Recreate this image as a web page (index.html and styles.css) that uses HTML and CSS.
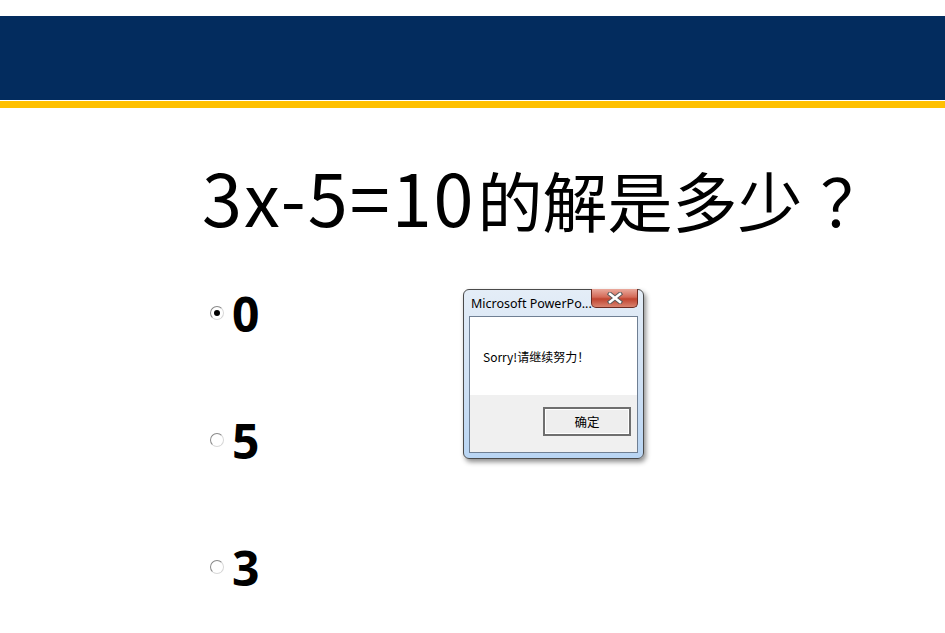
FILE: index.html
```html
<!DOCTYPE html>
<html lang="zh-CN">
<head>
  <meta charset="UTF-8" />
  <meta name="viewport" content="width=device-width, initial-scale=1.0" />
  <title>3x-5=10的解是多少？</title>
  <link rel="stylesheet" href="styles.css">
</head>
<body>

<header class="banner"></header>
<div class="stripe"></div>

<main class="slide">
  <h1 class="question"><span class="formula">3x-5=10</span>的解是多少<span class="qmark">？</span></h1>

  <div class="options">
    <label class="option">
      <span class="radio checked"></span>
      <span class="option-text">0</span>
    </label>
    <label class="option">
      <span class="radio"></span>
      <span class="option-text">5</span>
    </label>
    <label class="option">
      <span class="radio"></span>
      <span class="option-text">3</span>
    </label>
  </div>

  <div class="dialog">
    <div class="dialog-titlebar">
      <span class="dialog-title">Microsoft PowerPo...</span>
      <button class="close-btn" type="button">
        <svg width="16" height="12" viewBox="0 0 16 12">
          <path d="M3 2 L13 10 M13 2 L3 10" stroke="#5a5a5a" stroke-width="4.5" stroke-linecap="square"/>
          <path d="M3 2 L13 10 M13 2 L3 10" stroke="#fff" stroke-width="2.5" stroke-linecap="square"/>
        </svg>
      </button>
    </div>
    <div class="dialog-body">
      <div class="dialog-message">Sorry!请继续努力！</div>
      <div class="dialog-footer">
        <button class="ok-btn" type="button">确定</button>
      </div>
    </div>
  </div>
</main>

</body>
</html>
```

FILE: styles.css
```css
body {
  margin: 0;
  padding: 0;
  background-color: #ffffff;
  color: #000;
  font-family: "Noto Sans CJK SC", "Noto Sans", sans-serif;
}
.banner {
  margin-top: 16px;
  height: 84px;
  background-color: #032c5e;
  border-bottom: 1px solid #ffffff;
}
.stripe {
  height: 7px;
  background-color: #ffc000;
}
.slide {
  position: relative;
  padding-left: 202px;
}
.question {
  margin: 0;
  padding-top: 48px;
  font-size: 65px;
  font-weight: 400;
  line-height: 80px;
  white-space: nowrap;
}
.formula {
  font-size: 72px;
  letter-spacing: 2px;
  margin-right: 2px;
}
.qmark {
  margin-left: 18px;
}
.options {
  display: flex;
  flex-direction: column;
  gap: 77px;
  margin-top: 50px;
  padding-left: 8px;
}
.option {
  display: flex;
  align-items: center;
  gap: 8px;
  height: 50px;
}
.radio {
  width: 12px;
  height: 12px;
  border-radius: 50%;
  border: 1px solid #8a8a8a;
  border-right-color: #d8d8d8;
  border-bottom-color: #d8d8d8;
  background: #fff;
  display: flex;
  align-items: center;
  justify-content: center;
  margin-top: -2px;
}
.radio.checked::after {
  content: "";
  width: 6px;
  height: 6px;
  border-radius: 50%;
  background: #000;
}
.option-text {
  font-family: "Open Sans", "Noto Sans", sans-serif;
  font-size: 48px;
  font-weight: 700;
  line-height: 50px;
}

/* message box */
.dialog {
  position: absolute;
  left: 463px;
  top: 181px;
  width: 169px;
  height: 163px;
  padding: 0 5px 5px 5px;
  border: 1px solid #4a4a4a;
  border-radius: 6px;
  background: linear-gradient(#e4edf7, #cfe0f3 55%, #b9d5f3);
  box-shadow: 2px 3px 5px rgba(0, 0, 0, 0.45);
  display: flex;
  flex-direction: column;
}
.dialog-titlebar {
  height: 26px;
  display: flex;
  align-items: center;
  position: relative;
}
.dialog-title {
  font-family: "Noto Sans", sans-serif;
  font-size: 12.5px;
  padding-left: 2px;
  color: #000;
}
.close-btn {
  position: absolute;
  top: -1px;
  right: 0;
  width: 47px;
  height: 19px;
  padding: 0;
  border: 1px solid #6b2b22;
  border-top: none;
  border-radius: 0 0 5px 5px;
  background: linear-gradient(#e9a99c, #d46a58 45%, #c04430 55%, #d9836f);
  display: flex;
  align-items: center;
  justify-content: center;
}
.dialog-body {
  flex-grow: 1;
  border: 1px solid #6f7f93;
  background: #f0f0f0;
  display: flex;
  flex-direction: column;
}
.dialog-message {
  height: 78px;
  background: #ffffff;
  display: flex;
  align-items: center;
  padding-left: 13px;
  font-size: 12px;
}
.dialog-footer {
  flex-grow: 1;
  display: flex;
  justify-content: flex-end;
  align-items: flex-start;
  padding: 12px 6px 0 0;
}
.ok-btn {
  width: 88px;
  height: 29px;
  border: 2px solid #6f6f6f;
  background: #eeeeee;
  box-shadow: inset 0 0 0 1px #ffffff;
  font-family: "Noto Sans CJK SC", sans-serif;
  font-size: 12.5px;
  color: #000;
  padding: 0;
}
```
